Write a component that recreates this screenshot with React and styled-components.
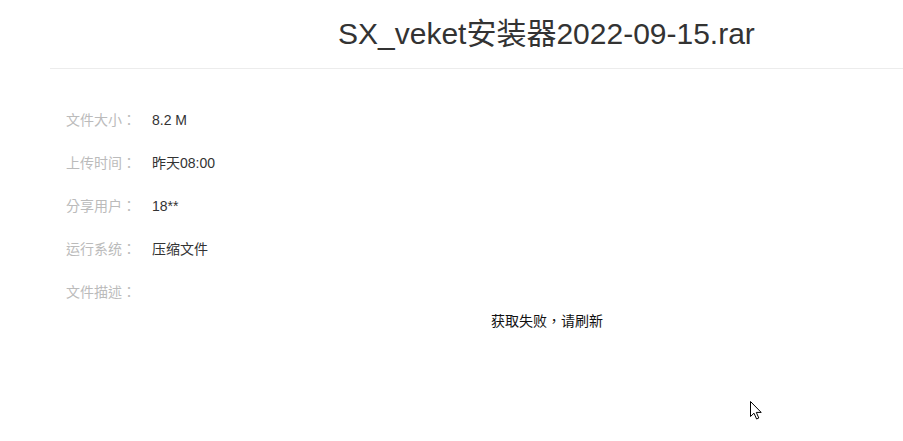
import React from "react";
import styled, { createGlobalStyle } from "styled-components";

const Global = createGlobalStyle`
  html, body { margin: 0; padding: 0; background: #fff; }
  body { font-family: "Liberation Sans", "Noto Sans CJK TC", sans-serif; }
`;

const Page = styled.div`
  position: relative;
  width: 903px;
  height: 441px;
  overflow: hidden;
`;

const Header = styled.div`
  height: 68px;
  padding-left: 338px;
  display: flex;
  align-items: center;
  box-sizing: border-box;
  padding-bottom: 6px;
`;

const Title = styled.h1`
  margin: 0;
  font-weight: normal;
  font-size: 30px;
  color: #333;
  white-space: nowrap;
  font-family: "Liberation Sans", "Noto Sans CJK SC", sans-serif;
`;

const Body = styled.div`
  margin-left: 50px;
  border-top: 1px solid #ececec;
  padding: 41px 0 0 16px;
`;

const InfoList = styled.dl`
  margin: 0;
  display: grid;
  grid-template-columns: 86px 1fr;
  grid-auto-rows: 43px;
  align-items: start;
  font-size: 14px;
  line-height: 20px;
`;

const Label = styled.dt`
  color: #bbb;
`;

const Value = styled.dd`
  margin: 0;
  color: #333;
`;

const Message = styled.div`
  margin: -14px 0 0 425px;
  font-size: 14px;
  line-height: 20px;
  color: #111;
`;

const Cursor = styled.svg`
  position: absolute;
  left: 750px;
  top: 401px;
`;

const rows = [
  ["文件大小：", "8.2 M"],
  ["上传时间：", "昨天08:00"],
  ["分享用户：", "18**"],
  ["运行系统：", "压缩文件"],
  ["文件描述：", ""],
];

export default function App() {
  return (
    <Page>
      <Global />
      <Header>
        <Title>SX_veket安装器2022-09-15.rar</Title>
      </Header>
      <Body>
        <InfoList>
          {rows.map(([l, v]) => (
            <React.Fragment key={l}>
              <Label>{l}</Label>
              <Value>{v}</Value>
            </React.Fragment>
          ))}
        </InfoList>
        <Message>获取失败，请刷新</Message>
      </Body>
      <Cursor width="13" height="19" viewBox="0 0 13 19">
        <path
          d="M0.5 0.5 L0.5 15.5 L4 12.2 L6.6 18 L8.8 17 L6.3 11.4 L11.2 11.4 Z"
          fill="#fff"
          stroke="#000"
          strokeWidth="1"
          strokeLinejoin="miter"
        />
      </Cursor>
    </Page>
  );
}
